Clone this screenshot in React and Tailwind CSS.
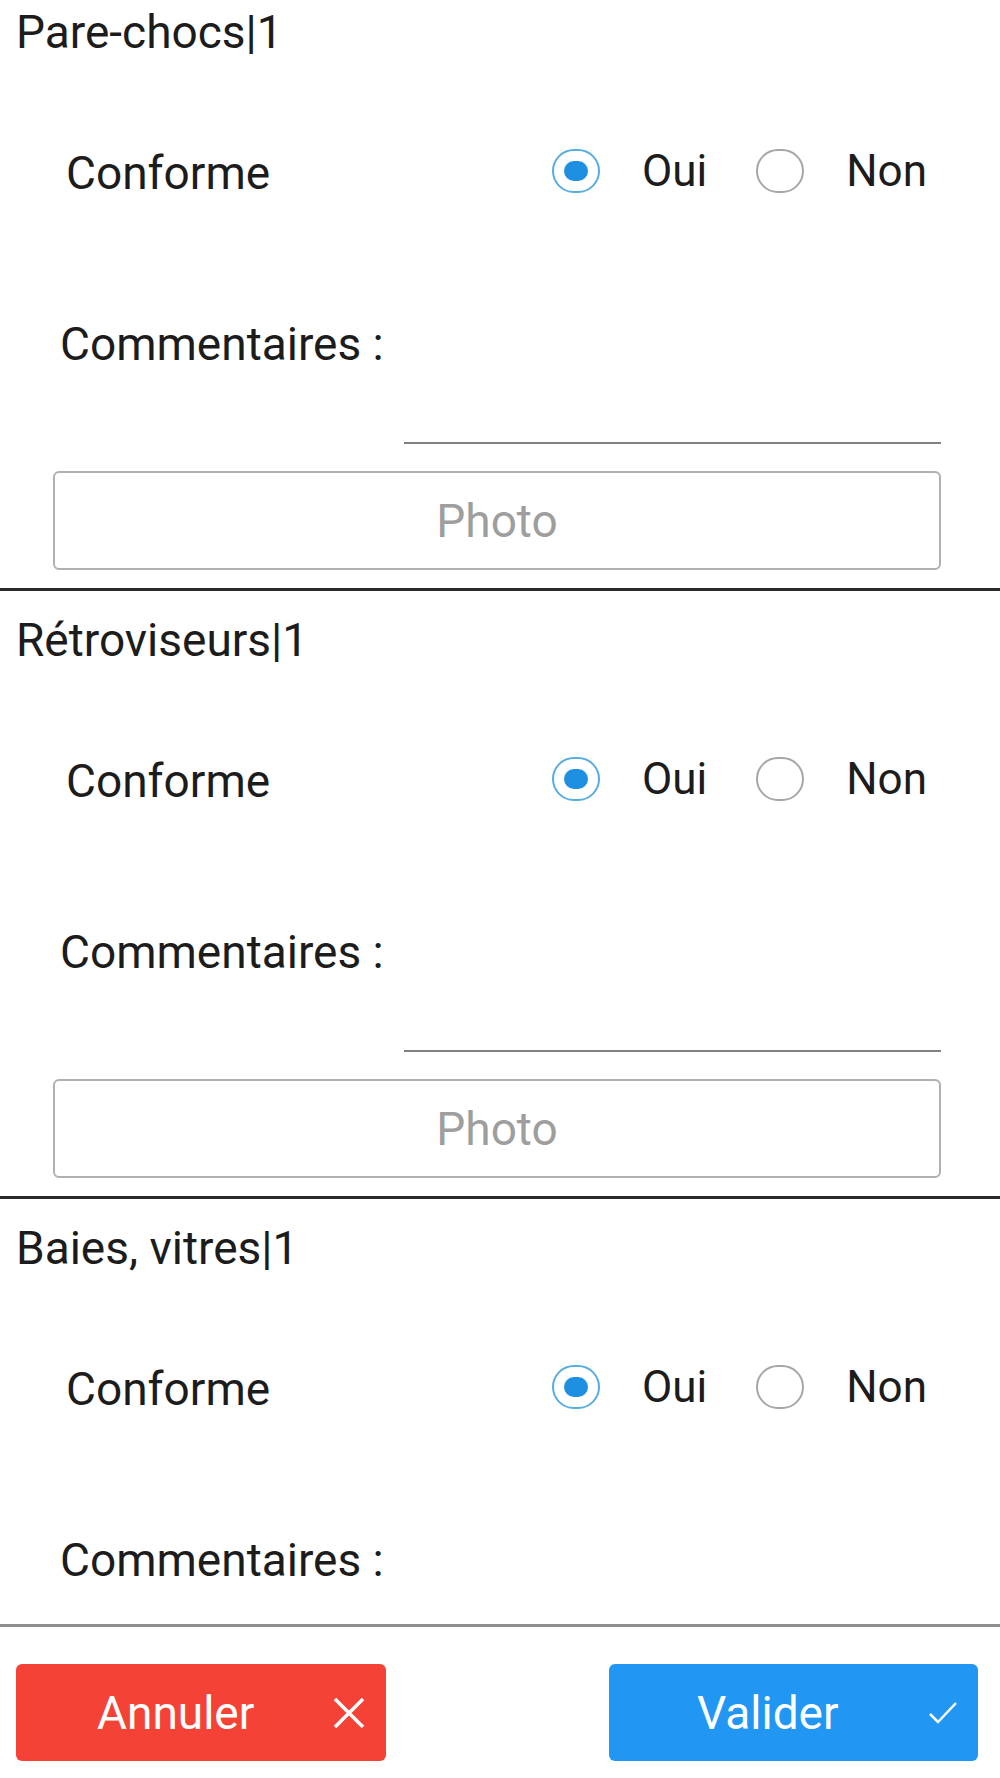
import React from "react";

const sections = ["Pare-chocs|1", "Rétroviseurs|1", "Baies, vitres|1"];

function Radio({ checked }) {
  return (
    <span
      className={`flex h-[44px] w-[48px] shrink-0 items-center justify-center rounded-full border-2 ${
        checked ? "border-[#58ade0]" : "border-[#a6a6a6]"
      }`}
    >
      {checked && <span className="h-[20px] w-[24px] rounded-full bg-[#1e8fe1]" />}
    </span>
  );
}

function Section({ title }) {
  return (
    <section>
      <div className="flex h-[98px] items-center pl-4 text-[46px] leading-none">{title}</div>
      <div className="flex h-[184px] items-center pl-[66px] pr-[73px]">
        <span className="text-[46px] leading-none">Conforme</span>
        <div className="-mt-[4px] ml-auto flex items-center text-[44px] leading-none">
          <Radio checked />
          <span className="ml-[42px]">Oui</span>
          <span className="ml-[49px]">
            <Radio />
          </span>
          <span className="ml-[42px]">Non</span>
        </div>
      </div>
      <div className="flex h-[158px] items-center pl-[60px] text-[46px] leading-none">Commentaires :</div>
      <div className="ml-[404px] mr-[59px] mt-[19px] h-[2px] bg-[#808080]" />
      <div className="ml-[53px] mr-[59px] mt-[27px] flex h-[99px] items-center justify-center rounded-md border-2 border-[#b0b0b0] text-[46px] leading-none text-[#9e9e9e]">
        Photo
      </div>
      <div className="mt-[18px] h-[3px] bg-[#2b2b2b]" />
    </section>
  );
}

export default function App() {
  return (
    <div className="relative flex h-[1778px] w-[1000px] flex-col overflow-hidden bg-white font-['Roboto','Liberation_Sans',sans-serif] text-[#1c1c1c]">
      <div className="flex-1 overflow-hidden">
        <div className="-mt-[17px]">
          {sections.map((s) => (
            <Section key={s} title={s} />
          ))}
        </div>
      </div>

      <footer className="h-[154px] shrink-0 bg-white">
        <div className="h-[3px] bg-[#8f8f8f]" />
        <div className="mt-[37px] flex items-center justify-between pl-4 pr-[22px]">
          <button className="flex h-[97px] w-[370px] items-center rounded-md bg-[#f44336] pl-[81px] pr-[20px] text-[46px] leading-none text-white">
            <span>Annuler</span>
            <svg className="ml-auto" width="34" height="34" viewBox="0 0 34 34" fill="none" stroke="white" strokeWidth="3.5">
              <path d="M3 3 L31 31 M31 3 L3 31" />
            </svg>
          </button>
          <button className="flex h-[97px] w-[369px] items-center rounded-md bg-[#2196f3] pl-[88px] pr-[20px] text-[46px] leading-none text-white">
            <span>Valider</span>
            <svg className="ml-auto" width="30" height="26" viewBox="0 0 30 26" fill="none" stroke="white" strokeWidth="2.5">
              <path d="M2 14 L10 22 L28 3" />
            </svg>
          </button>
        </div>
      </footer>
    </div>
  );
}
